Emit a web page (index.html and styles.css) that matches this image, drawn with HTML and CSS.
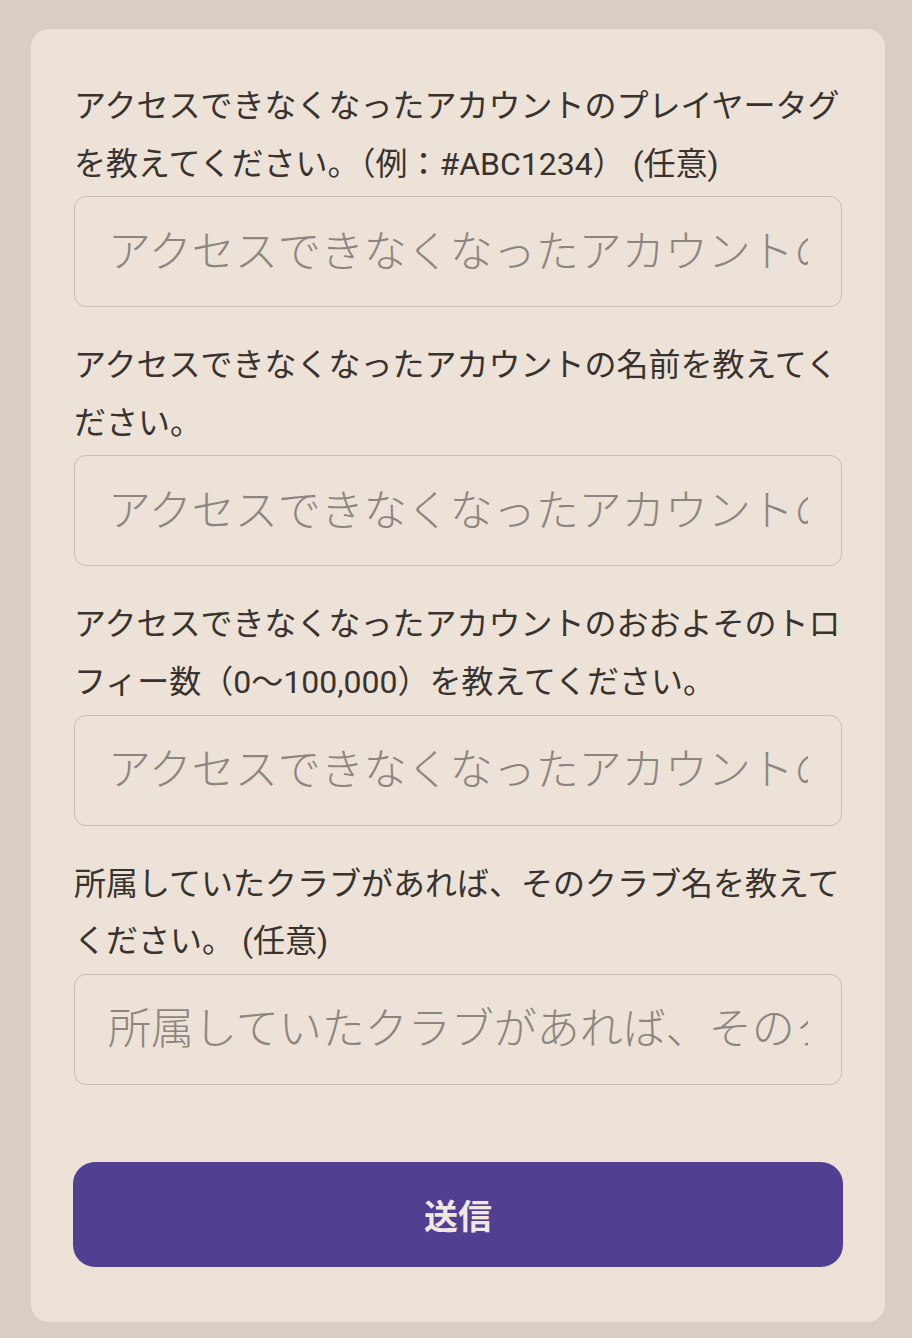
FILE: index.html
```html
<!DOCTYPE html>
<html lang="ja">
<head>
<meta charset="utf-8">
<title>フォーム</title>
<link rel="stylesheet" href="styles.css">
</head>
<body>
<main class="card">
  <form class="form">
    <div class="field">
      <label class="label" for="tag">アクセスできなくなったアカウントのプレイヤータグを教えてください。（例：#ABC1234） (任意)</label>
      <input class="input" id="tag" type="text" placeholder="アクセスできなくなったアカウントのプレイヤータグ">
    </div>
    <div class="field">
      <label class="label" for="name">アクセスできなくなったアカウントの名前を教えてください。</label>
      <input class="input" id="name" type="text" placeholder="アクセスできなくなったアカウントの名前">
    </div>
    <div class="field">
      <label class="label" for="trophy">アクセスできなくなったアカウントのおおよそのトロフィー数（0〜100,000）を教えてください。</label>
      <input class="input" id="trophy" type="text" placeholder="アクセスできなくなったアカウントのトロフィー数">
    </div>
    <div class="field">
      <label class="label" for="club">所属していたクラブがあれば、そのクラブ名を教えてください。 (任意)</label>
      <input class="input" id="club" type="text" placeholder="所属していたクラブがあれば、そのクラブ名">
    </div>
    <button class="submit" type="button">送信</button>
  </form>
</main>
</body>
</html>
```

FILE: styles.css
```css
html, body {
  margin: 0;
  padding: 0;
  background: #d9cec5;
}
body {
  padding: 29px 27px 17px 31px;
  font-family: Roboto, "Noto Sans CJK JP", sans-serif;
}
.card {
  width: 854px;
  box-sizing: border-box;
  background: #ede2d7;
  border-radius: 18px;
  padding: 49px 43px 55px 43px;
}
.form {
  display: flex;
  flex-direction: column;
}
.field {
  display: flex;
  flex-direction: column;
  margin-bottom: 30px;
}
.field:last-of-type {
  margin-bottom: 77px;
}
.label {
  display: block;
  font-size: 32px;
  line-height: 57.6px;
  color: #38332f;
  margin-bottom: 3px;
}
.input {
  box-sizing: border-box;
  width: 100%;
  height: 111px;
  margin: 0;
  padding: 0 33px 0 33px;
  border: 1.5px solid #c9beb4;
  border-radius: 12px;
  background: #ede2d7;
  font-family: Roboto, "Noto Sans CJK JP", sans-serif;
  font-size: 43px;
  font-weight: 300;
  color: #3a3531;
  outline: none;
}
.input::placeholder {
  color: #8d8680;
  opacity: 1;
}
.submit {
  width: 770px;
  margin-left: -1px;
  height: 105px;
  border: none;
  border-radius: 22px;
  background: #513f91;
  color: #f1e9e1;
  font-family: Roboto, "Noto Sans CJK JP", sans-serif;
  font-size: 34px;
  font-weight: 700;
  cursor: pointer;
}
```
